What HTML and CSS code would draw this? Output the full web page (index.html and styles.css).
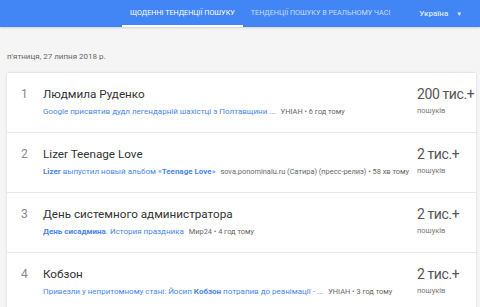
FILE: index.html
```html
<!DOCTYPE html>
<html lang="uk">
<head>
  <meta charset="UTF-8" />
  <title>Тенденції пошуку</title>
  <link rel="stylesheet" href="styles.css">
</head>
<body>
  <header class="topbar">
    <nav class="tabs">
      <a class="tab active">Щоденні тенденції пошуку</a>
      <a class="tab">Тенденції пошуку в реальному часі</a>
    </nav>
    <div class="geo">Україна <span class="caret">▼</span></div>
  </header>

  <main class="content">
    <div class="date">п'ятниця, 27 липня 2018 р.</div>

    <div class="card">
      <div class="row">
        <div class="rank">1</div>
        <div class="info">
          <div class="title">Людмила Руденко</div>
          <div class="snippet"><span class="link">Google присвятив дудл легендарній шахістці з Полтавщини ...</span> <span class="src">УНІАН • 6 год тому</span></div>
        </div>
        <div class="count">
          <div class="num">200 тис.+</div>
          <div class="lbl">пошуків</div>
        </div>
      </div>

      <div class="row">
        <div class="rank">2</div>
        <div class="info">
          <div class="title">Lizer Teenage Love</div>
          <div class="snippet"><span class="link"><b>Lizer</b> выпустил новый альбом «<b>Teenage Love</b>»</span> <span class="src">sova.ponominalu.ru (Сатира) (пресс-релиз) • 58 хв тому</span></div>
        </div>
        <div class="count">
          <div class="num">2 тис.+</div>
          <div class="lbl">пошуків</div>
        </div>
      </div>

      <div class="row">
        <div class="rank">3</div>
        <div class="info">
          <div class="title">День системного администратора</div>
          <div class="snippet"><span class="link"><b>День сисадмина</b>. История праздника</span> <span class="src">Мир24 • 4 год тому</span></div>
        </div>
        <div class="count">
          <div class="num">2 тис.+</div>
          <div class="lbl">пошуків</div>
        </div>
      </div>

      <div class="row">
        <div class="rank">4</div>
        <div class="info">
          <div class="title">Кобзон</div>
          <div class="snippet"><span class="link">Привезли у непритомному стані: Йосип <b>Кобзон</b> потрапив до реанімації - ...</span> <span class="src">УНІАН • 3 год тому</span></div>
        </div>
        <div class="count">
          <div class="num">2 тис.+</div>
          <div class="lbl">пошуків</div>
        </div>
      </div>
    </div>
  </main>
</body>
</html>
```

FILE: styles.css
```css
body {
  margin: 0;
  background-color: #f5f5f5;
  font-family: Roboto, "Liberation Sans", sans-serif;
  color: #333;
  overflow: hidden;
}

.topbar {
  background-color: #4285f4;
  height: 27px;
  display: flex;
  align-items: stretch;
  box-shadow: 0 1px 2px rgba(0,0,0,0.15);
}

.tabs {
  display: flex;
  margin-left: 122px;
}

.tab {
  display: flex;
  align-items: center;
  padding: 0 8px;
  font-size: 7.2px;
  text-transform: uppercase;
  color: rgba(255,255,255,0.72);
  border-bottom: 2px solid transparent;
  white-space: nowrap;
}

.tab.active {
  color: #fff;
  border-bottom-color: #fff;
}

.geo {
  display: flex;
  align-items: center;
  margin-left: 21px;
  font-size: 8px;
  font-weight: 500;
  color: rgba(255,255,255,0.85);
  white-space: nowrap;
}

.caret {
  font-size: 6px;
  margin-left: 8px;
}

.content {
  padding: 0 4px 0 7px;
}

.date {
  font-size: 8px;
  color: #666;
  padding: 25px 0 12px 0;
}

.card {
  background-color: #fff;
  box-shadow: 0 0 2px rgba(0,0,0,0.18);
}

.row {
  display: flex;
  align-items: flex-start;
  height: 60px;
  box-sizing: border-box;
  padding-top: 13px;
  border-bottom: 1px solid #e8e8e8;
}

.rank {
  width: 36px;
  padding-left: 14px;
  box-sizing: border-box;
  font-size: 12px;
  color: #888;
  line-height: 16px;
}

.info {
  flex: 1;
  min-width: 0;
}

.title {
  font-size: 11.7px;
  color: #333;
  line-height: 16px;
}

.snippet {
  margin-top: 5px;
  font-size: 8px;
  white-space: nowrap;
  overflow: hidden;
}

.link {
  color: #4a86e8;
}

.link b {
  font-weight: 700;
}

.src {
  font-size: 7.4px;
  color: #666;
  margin-left: 3px;
}

.count {
  width: 59px;
  flex-shrink: 0;
  white-space: nowrap;
}

.num {
  font-size: 14px;
  letter-spacing: -0.4px;
  color: #555;
  line-height: 16px;
}

.lbl {
  margin-top: 4px;
  font-size: 7.5px;
  color: #777;
}
```
